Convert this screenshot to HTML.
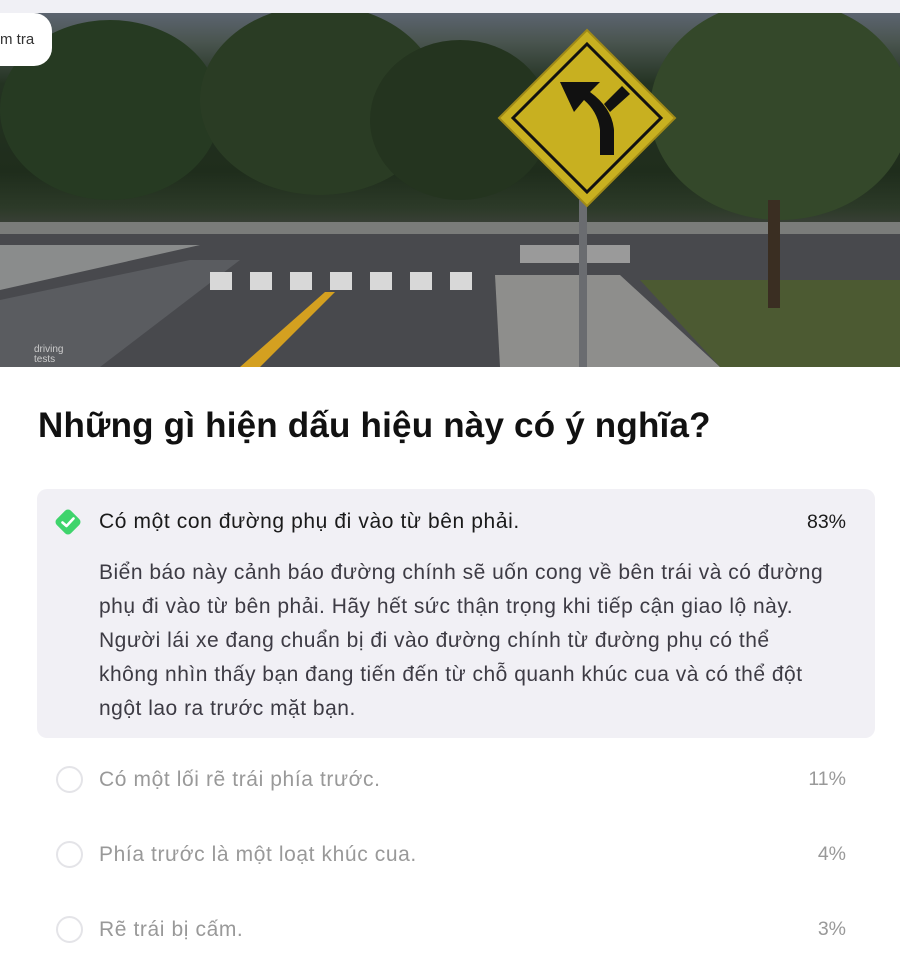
<!DOCTYPE html>
<html><head><meta charset="utf-8"><style>
*{margin:0;padding:0;box-sizing:border-box}
body{width:900px;height:980px;background:#fff;font-family:"Liberation Sans","DejaVu Sans",sans-serif;overflow:hidden;position:relative}
.top{position:absolute;left:0;top:0;width:900px;height:13px;background:#f0f0f5}
.photo{position:absolute;left:0;top:13px;width:900px;height:354px;overflow:hidden;
background:linear-gradient(#5c6470 0%,#4a5550 8%,#243322 20%,#1f2d1c 45%,#2c3a28 55%,#3a4038 60%,#55585a 64%,#4a4c50 75%,#3e4044 100%)}
.badge{position:absolute;left:-20px;top:13px;width:72px;height:53px;background:#fff;border-radius:0 18px 18px 0;font-size:15px;color:#333;padding:18px 0 0 20px}
h1{position:absolute;left:38px;top:406px;font-size:35px;font-weight:bold;color:#111;letter-spacing:0.2px;white-space:nowrap}
.card{position:absolute;left:37px;top:489px;width:838px;height:249px;background:#f1f0f5;border-radius:10px}
.opt{position:absolute;left:99px;font-size:21px;letter-spacing:0.6px;white-space:nowrap}
.pct{position:absolute;right:54px;font-size:19.5px}
.circle{position:absolute;left:56px;width:27px;height:27px;border:2px solid #e4e4e8;border-radius:50%}
.exp{position:absolute;left:99px;top:556px;width:780px;font-size:21px;line-height:34px;color:#3d3b44;letter-spacing:0.5px;white-space:nowrap}
</style></head><body>
<div class="top"></div>
<div class="photo">
<svg width="900" height="354" viewBox="0 13 900 354" style="position:absolute;left:0;top:0">
<rect x="0" y="230" width="900" height="137" fill="#48494d"/>
<polygon points="0,290 200,245 0,245" fill="#8a8c8c"/>
<polygon points="0,367 0,300 190,260 240,260 100,367" fill="#5a5c60"/>
<polygon points="495,275 620,275 720,367 500,367" fill="#8e8e8c"/>
<polygon points="640,280 900,280 900,367 720,367" fill="#4c5a32"/>
<rect x="0" y="222" width="900" height="12" fill="#7a7c7a"/>
<polygon points="240,367 260,367 335,292 325,292" fill="#d4a020"/>
<g fill="#d8d8d8"><rect x="210" y="272" width="22" height="18"/><rect x="250" y="272" width="22" height="18"/><rect x="290" y="272" width="22" height="18"/><rect x="330" y="272" width="22" height="18"/><rect x="370" y="272" width="22" height="18"/><rect x="410" y="272" width="22" height="18"/><rect x="450" y="272" width="22" height="18"/></g>
<rect x="520" y="245" width="110" height="18" fill="#9a9a9a"/>
<ellipse cx="110" cy="110" rx="110" ry="90" fill="#263a22"/>
<ellipse cx="320" cy="100" rx="120" ry="95" fill="#2a3c24"/>
<ellipse cx="460" cy="120" rx="90" ry="80" fill="#24341f"/>
<ellipse cx="780" cy="110" rx="130" ry="110" fill="#34482a"/>
<rect x="768" y="200" width="12" height="108" fill="#3a2e22"/>
<rect x="579" y="200" width="8" height="167" fill="#6a6c70"/>
<polygon points="587,30 675,118 587,206 499,118" fill="#c8b020" stroke="#a08a18" stroke-width="2"/>
<polygon points="587,44 661,118 587,192 513,118" fill="none" stroke="#111" stroke-width="3"/>
<path d="M560,82 L600,82 L590,92 Q612,108 614,130 L614,155 L600,155 L600,130 Q598,112 584,100 L574,112 Z" fill="#111"/>
<polygon points="604,104 622,86 630,94 610,112" fill="#111"/>
<text x="34" y="352" font-size="10" fill="#ccc" font-family="Liberation Sans">driving</text>
<text x="34" y="362" font-size="10" fill="#ccc" font-family="Liberation Sans">tests</text>
</svg>
</div>
<div class="badge">m tra</div>
<h1>Những gì hiện dấu hiệu này có ý nghĩa?</h1>
<div class="card"></div>
<svg style="position:absolute;left:51px;top:505px" width="34" height="34" viewBox="0 0 34 34"><rect x="7" y="7" width="20" height="20" rx="4" transform="rotate(45 17 17)" fill="#3fd46c"/><path d="M11.5 17.5 L15.5 21 L22.5 13.5" stroke="#fff" stroke-width="2.6" fill="none" stroke-linecap="round" stroke-linejoin="round"/></svg>
<div class="opt" style="top:510px;color:#1a1a1a">Có một con đường phụ đi vào từ bên phải.</div>
<div class="pct" style="top:511px;color:#1a1a1a">83%</div>
<div class="exp">Biển báo này cảnh báo đường chính sẽ uốn cong về bên trái và có đường<br>phụ đi vào từ bên phải. Hãy hết sức thận trọng khi tiếp cận giao lộ này.<br>Người lái xe đang chuẩn bị đi vào đường chính từ đường phụ có thể<br>không nhìn thấy bạn đang tiến đến từ chỗ quanh khúc cua và có thể đột<br>ngột lao ra trước mặt bạn.</div>
<div class="circle" style="top:766px"></div>
<div class="opt" style="top:768px;color:#999">Có một lối rẽ trái phía trước.</div>
<div class="pct" style="top:768px;color:#999">11%</div>
<div class="circle" style="top:841px"></div>
<div class="opt" style="top:843px;color:#999">Phía trước là một loạt khúc cua.</div>
<div class="pct" style="top:843px;color:#999">4%</div>
<div class="circle" style="top:916px"></div>
<div class="opt" style="top:918px;color:#999">Rẽ trái bị cấm.</div>
<div class="pct" style="top:918px;color:#999">3%</div>
</body></html>
